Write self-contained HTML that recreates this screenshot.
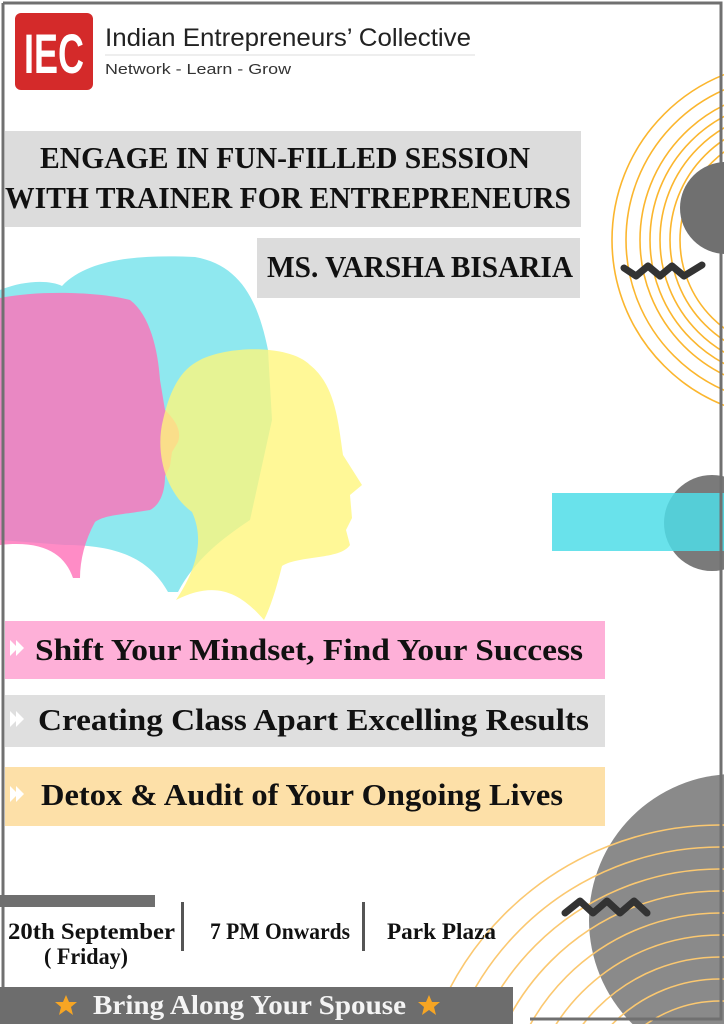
<!DOCTYPE html>
<html><head><meta charset="utf-8"><style>
html,body{margin:0;padding:0;background:#fff;width:724px;height:1024px;overflow:hidden;}
svg{display:block}
.s{font-family:"Liberation Serif",serif;font-weight:bold;}
</style></head><body>
<svg width="724" height="1024" viewBox="0 0 724 1024" xmlns="http://www.w3.org/2000/svg">
<rect width="724" height="1024" fill="#fff"/>
<g fill="none" stroke="#fbb62e" stroke-width="1.6">
<circle cx="790" cy="240" r="178"/><circle cx="790" cy="240" r="164"/><circle cx="790" cy="240" r="150"/>
<circle cx="790" cy="240" r="140"/><circle cx="790" cy="240" r="130"/><circle cx="790" cy="240" r="120"/><circle cx="790" cy="240" r="110"/>
</g>
<circle cx="726" cy="208" r="46" fill="#707070"/>
<path d="M624 268 L636 276 L648 266 L660 276 L672 266 L684 276 L702 265" fill="none" stroke="#333" stroke-width="7" stroke-linecap="round" stroke-linejoin="round"/>
<circle cx="712" cy="523" r="48" fill="#7a7a7a"/>
<rect x="552" y="493" width="172" height="58" fill="#4fdde8" opacity="0.85"/>
<circle cx="735" cy="920" r="146" fill="#8a8a8a"/>
<g fill="none" stroke="#fbc870" stroke-width="1.6">
<circle cx="720" cy="1130" r="305"/><circle cx="720" cy="1130" r="283"/><circle cx="720" cy="1130" r="261"/>
<circle cx="720" cy="1130" r="239"/><circle cx="720" cy="1130" r="217"/><circle cx="720" cy="1130" r="195"/>
<circle cx="720" cy="1130" r="173"/><circle cx="720" cy="1130" r="151"/><circle cx="720" cy="1130" r="129"/>
</g>
<path d="M565 913 L580 901 L593 913 L607 901 L620 913 L634 901 L647 913" fill="none" stroke="#333" stroke-width="7" stroke-linecap="round" stroke-linejoin="round"/>
<path d="M0 290 C25 280 50 280 62 286 C90 256 150 255 195 257 C240 265 258 300 268 350 L272 420 L250 520 C220 540 195 560 178 592 L168 592 C150 560 120 545 65 545 L0 540 Z" fill="#8fe8ef"/>
<path d="M0 298 C40 290 100 292 130 300 C150 315 158 350 160 380 L165 410 C175 420 182 430 178 442 L172 452 L170 466 L165 476 C165 492 160 505 150 510 C120 515 105 515 95 522 C85 540 80 560 80 578 L73 578 C65 555 45 540 0 545 Z" fill="#ff6fb8" opacity="0.8"/>
<path d="M200 360 C230 345 290 345 310 365 C335 385 338 420 343 455 L362 485 L350 495 L352 518 L346 530 L350 545 C340 560 300 555 282 566 C276 590 270 608 264 620 C240 592 215 580 176 600 C196 570 205 540 192 512 C165 492 155 452 163 420 C170 390 180 370 200 360 Z" fill="#fff67a" opacity="0.78"/>
<g fill="none" stroke="#707070" stroke-width="3">
<path d="M3 3 L721 3 L721 1019 L530 1019"/>
<path d="M3 3 L3 1024"/>
</g>
<rect x="15" y="13" width="78" height="77" rx="6" fill="#d42a2a"/>
<text x="54" y="73" text-anchor="middle" fill="#fff" font-family="Liberation Sans Narrow,Liberation Sans,sans-serif" font-weight="bold" font-size="56" textLength="60" lengthAdjust="spacingAndGlyphs">IEC</text>
<text x="105" y="46" fill="#222" font-family="Liberation Sans,sans-serif" font-size="25" textLength="366" lengthAdjust="spacingAndGlyphs">Indian Entrepreneurs’ Collective</text>
<line x1="105" y1="55" x2="475" y2="55" stroke="#ddd" stroke-width="1"/>
<text x="105" y="74" fill="#333" font-family="Liberation Sans,sans-serif" font-size="15" textLength="186" lengthAdjust="spacingAndGlyphs">Network - Learn - Grow</text>
<rect x="5" y="131" width="576" height="96" fill="#dcdcdc"/>
<text class="s" x="40" y="168" font-size="31" textLength="490" lengthAdjust="spacingAndGlyphs" fill="#111">ENGAGE IN FUN-FILLED SESSION</text>
<text class="s" x="5" y="208" font-size="31" textLength="566" lengthAdjust="spacingAndGlyphs" fill="#111">WITH TRAINER FOR ENTREPRENEURS</text>
<rect x="257" y="238" width="323" height="60" fill="#dcdcdc"/>
<text class="s" x="267" y="277" font-size="31" textLength="306" lengthAdjust="spacingAndGlyphs" fill="#111">MS. VARSHA BISARIA</text>
<rect x="5" y="621" width="600" height="58" fill="#feb0d8"/>
<rect x="5" y="695" width="600" height="52" fill="#dfdfdf"/>
<rect x="5" y="767" width="600" height="59" fill="#fde0a8"/>
<g fill="#fff"><path d="M10 640 L18 648 L10 656 Z M16 640 L24 648 L16 656 Z"/><path d="M10 711 L18 719 L10 727 Z M16 711 L24 719 L16 727 Z"/><path d="M10 786 L18 794 L10 802 Z M16 786 L24 794 L16 802 Z"/></g>
<text class="s" x="35" y="660" font-size="31" textLength="548" lengthAdjust="spacingAndGlyphs" fill="#111">Shift Your Mindset, Find Your Success</text>
<text class="s" x="38" y="730" font-size="31" textLength="551" lengthAdjust="spacingAndGlyphs" fill="#111">Creating Class Apart Excelling Results</text>
<text class="s" x="41" y="805" font-size="31" textLength="522" lengthAdjust="spacingAndGlyphs" fill="#111">Detox &amp; Audit of Your Ongoing Lives</text>
<rect x="0" y="895" width="155" height="12" fill="#6f6f6f"/>
<rect x="181" y="902" width="3" height="49" fill="#555"/>
<rect x="362" y="902" width="3" height="49" fill="#555"/>
<text class="s" x="8" y="939" font-size="23" textLength="167" lengthAdjust="spacingAndGlyphs" fill="#111">20th September</text>
<text class="s" x="44" y="964" font-size="23" textLength="84" lengthAdjust="spacingAndGlyphs" fill="#111">( Friday)</text>
<text class="s" x="210" y="939" font-size="23" textLength="140" lengthAdjust="spacingAndGlyphs" fill="#111">7 PM Onwards</text>
<text class="s" x="387" y="939" font-size="23" textLength="109" lengthAdjust="spacingAndGlyphs" fill="#111">Park Plaza</text>
<rect x="0" y="987" width="513" height="37" fill="#6d6d6d"/>
<text class="s" x="93" y="1014" font-size="27" textLength="313" lengthAdjust="spacingAndGlyphs" fill="#f4f4f4">Bring Along Your Spouse</text>
<g fill="#f6a524">
<path d="M66 995 L69 1002 L77 1002 L71 1007 L73 1015 L66 1010 L59 1015 L61 1007 L55 1002 L63 1002 Z"/>
<path d="M429 995 L432 1002 L440 1002 L434 1007 L436 1015 L429 1010 L422 1015 L424 1007 L418 1002 L426 1002 Z"/>
</g>
</svg>
</body></html>
